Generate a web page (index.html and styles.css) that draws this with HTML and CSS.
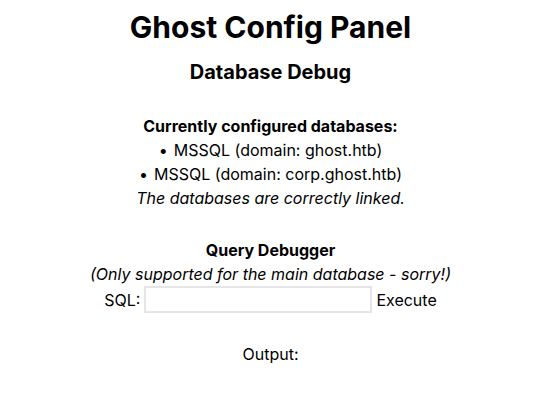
FILE: index.html
```html
<!DOCTYPE html>
<html>
<head>
<meta charset="utf-8">
<link rel="stylesheet" href="styles.css">
</head>
<body>
<h1 class="title">Ghost Config Panel</h1>
<h2 class="subtitle">Database Debug</h2>
<section class="dbs">
  <p class="label">Currently configured databases:</p>
  <ul class="db-list">
    <li>MSSQL (domain: ghost.htb)</li>
    <li>MSSQL (domain: corp.ghost.htb)</li>
  </ul>
  <p class="note">The databases are correctly linked.</p>
</section>
<section class="query">
  <p class="label">Query Debugger</p>
  <p class="note">(Only supported for the main database - sorry!)</p>
  <form class="sql-form">
    <label class="sql-label">SQL:</label>
    <input class="sql-input" type="text">
    <button class="exec" type="button">Execute</button>
  </form>
</section>
<p class="output">Output:</p>
</body>
</html>
```

FILE: styles.css
```css
html, body {
  margin: 0;
  padding: 0;
  background: #fff;
}
body {
  font-family: Inter, "Noto Sans", sans-serif;
  font-size: 16px;
  line-height: 24px;
  color: #000;
  text-align: center;
  padding-right: 12px;
}
.title {
  font-size: 30px;
  line-height: 36px;
  font-weight: 700;
  margin: 9px 0 0;
}
.subtitle {
  font-size: 20px;
  line-height: 28px;
  font-weight: 700;
  margin: 13px 0 0;
}
.dbs {
  margin-top: 28px;
}
.label {
  font-weight: 700;
  margin: 0;
}
.db-list {
  list-style: none;
  margin: 0;
  padding: 0;
}
.db-list li::before {
  content: "\2022";
  margin-right: 6px;
}
.note {
  font-style: italic;
  margin: 0;
}
.query {
  margin-top: 28px;
}
.sql-form {
  display: flex;
  justify-content: center;
  align-items: center;
  gap: 4px;
  margin: 0;
}
.sql-input {
  box-sizing: border-box;
  width: 228px;
  height: 27px;
  border: 2px solid #e4e4e9;
  border-radius: 0;
  padding: 0 4px;
  font: inherit;
  outline: none;
}
.exec {
  font: inherit;
  background: transparent;
  border: 0;
  padding: 0;
  color: #000;
}
.output {
  margin: 29px 0 0;
}
```
